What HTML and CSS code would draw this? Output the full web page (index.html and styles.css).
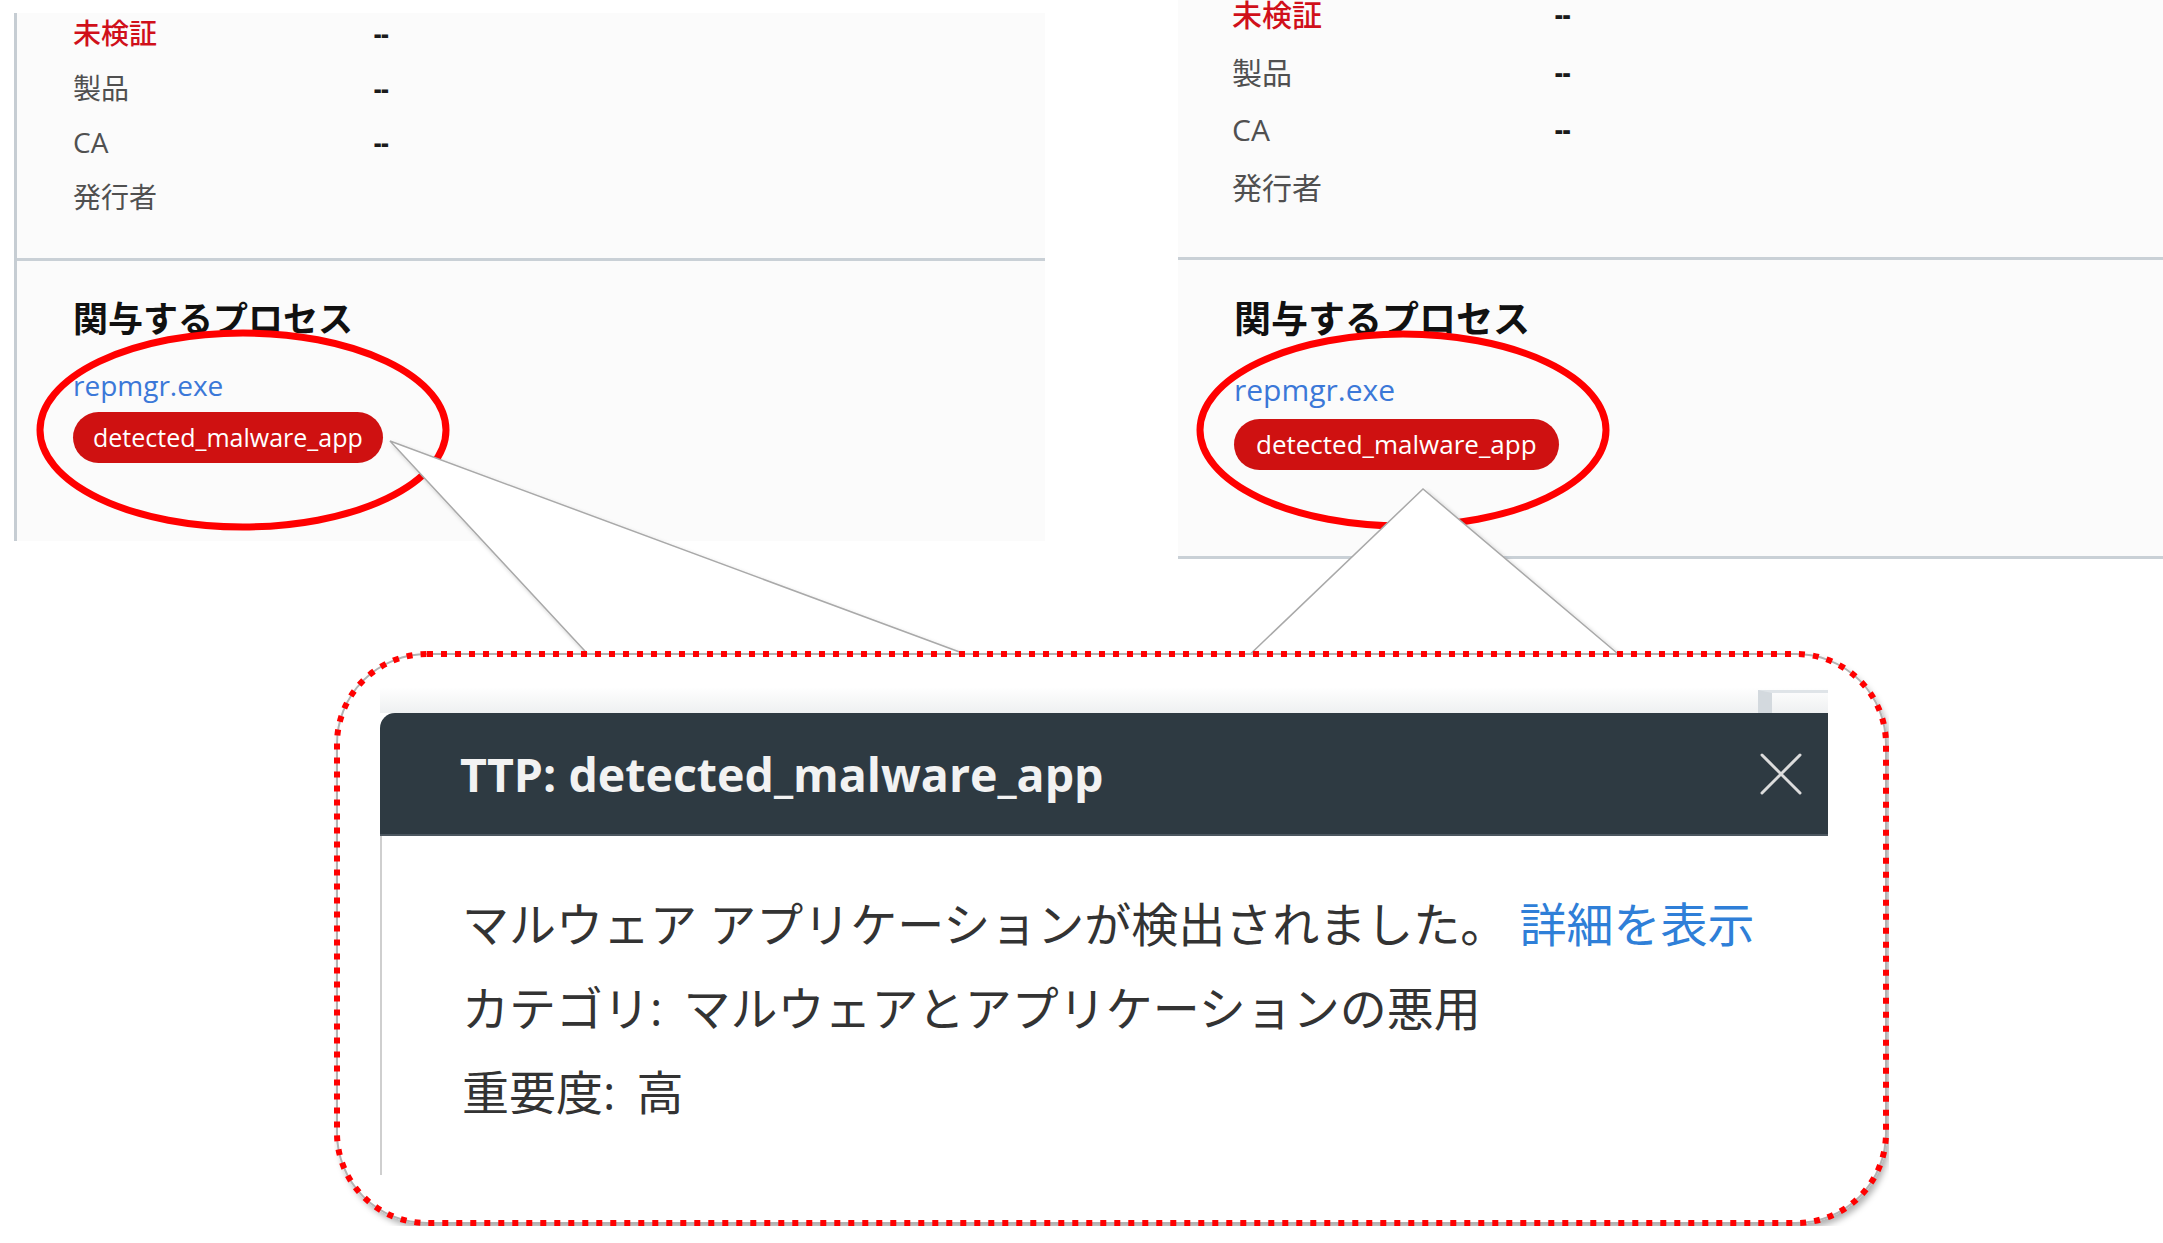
FILE: index.html
```html
<!DOCTYPE html>
<html lang="ja">
<head>
<meta charset="utf-8">
<title>TTP: detected_malware_app</title>
<link rel="stylesheet" href="styles.css">
</head>
<body>
<div class="page">
  <div class="panels">
    <section class="panel panel--left">
      <dl class="props">
        <dt class="warn">未検証</dt><dd>--</dd>
        <dt>製品</dt><dd>--</dd>
        <dt>CA</dt><dd>--</dd>
        <dt>発行者</dt><dd></dd>
      </dl>
      <div class="procs">
        <h3 class="procs-title">関与するプロセス</h3>
        <a class="proc">repmgr.exe</a>
        <span class="pill">detected_malware_app</span>
      </div>
    </section>
    <section class="panel panel--right">
      <dl class="props">
        <dt class="warn">未検証</dt><dd>--</dd>
        <dt>製品</dt><dd>--</dd>
        <dt>CA</dt><dd>--</dd>
        <dt>発行者</dt><dd></dd>
      </dl>
      <div class="procs">
        <h3 class="procs-title">関与するプロセス</h3>
        <a class="proc">repmgr.exe</a>
        <span class="pill">detected_malware_app</span>
      </div>
    </section>
  </div>

  <svg class="marks" width="2163" height="1243" viewBox="0 0 2163 1243">
    <defs>
      <filter id="lineShadow" x="-20%" y="-20%" width="140%" height="140%">
        <feDropShadow dx="3" dy="3" stdDeviation="2" flood-color="#000" flood-opacity="0.22"/>
      </filter>
    </defs>
    <ellipse cx="243" cy="430" rx="203" ry="97" fill="none" stroke="#ff0000" stroke-width="7"/>
    <ellipse cx="1403" cy="430" rx="203" ry="96" fill="none" stroke="#ff0000" stroke-width="7"/>
    <g filter="url(#lineShadow)">
      <polygon points="390,441 597,664 992,664" fill="#ffffff"/>
      <polyline points="597,664 390,441 992,664" fill="none" stroke="#a9a9a9" stroke-width="1.5"/>
      <polygon points="1423,489 1240,664 1630,664" fill="#ffffff"/>
      <polyline points="1240,664 1423,489 1630,664" fill="none" stroke="#a9a9a9" stroke-width="1.5"/>
    </g>
  </svg>

  <div class="callout">
    <svg class="callout-frame" width="1555" height="575" viewBox="0 0 1555 575">
      <defs>
        <filter id="boxShadow" x="-5%" y="-5%" width="110%" height="115%">
          <feDropShadow dx="3" dy="5" stdDeviation="3" flood-color="#000" flood-opacity="0.3"/>
        </filter>
      </defs>
      <rect x="3" y="3" width="1549" height="569" rx="90" ry="90" fill="#ffffff" stroke="#b3b3b3" stroke-width="2" filter="url(#boxShadow)"/>
      <rect x="3" y="3" width="1549" height="569" rx="90" ry="90" fill="none" stroke="#ff0000" stroke-width="6" stroke-dasharray="6 8"/>
    </svg>
    <div class="dialog">
      <div class="dialog-top"><span class="tab"></span></div>
      <div class="dialog-head">
        <h2 class="dialog-title">TTP: detected_malware_app</h2>
        <span class="close" aria-label="閉じる">
          <svg width="42" height="42" viewBox="0 0 42 42"><path d="M2 2 L40 40 M40 2 L2 40" stroke="#dcdcdc" stroke-width="3" fill="none" stroke-linecap="round"/></svg>
        </span>
      </div>
      <div class="dialog-body">
        <p>マルウェア アプリケーションが検出されました。 <a class="more">詳細を表示</a></p>
        <p>カテゴリ<span class="sep">:</span> マルウェアとアプリケーションの悪用</p>
        <p>重要度<span class="sep">:</span> 高</p>
      </div>
    </div>
  </div>
</div>
</body>
</html>
```

FILE: styles.css
```css
body {
  margin: 0;
  background: #ffffff;
  font-family: "Open Sans", "Noto Sans CJK JP", sans-serif;
  color: #333333;
}

.page {
  position: relative;
  width: 2163px;
  height: 1243px;
  overflow: hidden;
}

/* ---------- panels ---------- */
.panels {
  display: flex;
  align-items: flex-start;
}

.panel {
  background: #fbfbfb;
  box-sizing: border-box;
}

.panel--left {
  margin-left: 14px;
  margin-top: 13px;
  width: 1031px;
  border-left: 3px solid #c6cdd3;
}

.panel--right {
  margin-left: 133px;
  flex: 1;
  border-bottom: 3px solid #c9d0d6;
}

.props {
  display: grid;
  grid-template-columns: 301px 1fr;
  row-gap: 14.5px;
  margin: 0;
  padding: 0 0 41.5px 56px;
  border-bottom: 3px solid #c9d0d6;
  font-size: 28px;
  line-height: 40px;
}

.props dt {
  color: #505050;
}

.props dt.warn {
  color: #d0101a;
  font-weight: 500;
}

.props dd {
  margin: 0;
  font-size: 23px;
  font-weight: 800;
  color: #1a1a1a;
}

.procs {
  display: flex;
  flex-direction: column;
  align-items: flex-start;
  padding: 38px 0 78px 56px;
}

.procs-title {
  margin: 0;
  font-size: 35px;
  line-height: 40px;
  font-weight: 700;
  color: #111111;
}

.proc {
  margin-top: 29px;
  font-size: 28px;
  line-height: 34px;
  color: #3b78d8;
}

.pill {
  margin-top: 10px;
  padding: 0 20px;
  height: 51px;
  line-height: 51px;
  border-radius: 26px;
  background: #cf1111;
  color: #ffffff;
  font-size: 25px;
}

/* right panel is captured slightly larger */
.panel--right .props {
  grid-template-columns: 323px 1fr;
  row-gap: 27.7px;
  padding: 0 0 54px 54px;
  font-size: 30px;
  line-height: 30px;
}

.panel--right .props dd {
  font-size: 24px;
}

.panel--right .procs {
  padding: 38px 0 86px 56px;
}

.panel--right .procs-title {
  font-size: 37px;
  line-height: 42px;
}

.panel--right .proc {
  margin-top: 33px;
  font-size: 30px;
}

.panel--right .pill {
  margin-top: 12px;
  padding: 0 22px;
  font-size: 26px;
}

/* ---------- annotation layer ---------- */
.marks {
  position: absolute;
  left: 0;
  top: 0;
  pointer-events: none;
}

.callout {
  position: absolute;
  left: 334px;
  top: 651px;
  width: 1555px;
  height: 575px;
  box-sizing: border-box;
  padding: 36px 0 0 46px;
}

.callout-frame {
  position: absolute;
  left: 0;
  top: 0;
}

.dialog {
  position: relative;
  width: 1448px;
}

.dialog-top {
  display: flex;
  justify-content: flex-end;
  height: 26px;
  background: linear-gradient(#ffffff, #eef0f1);
}

.tab {
  width: 70px;
  height: 23px;
  margin-top: 3px;
  border-top: 3px solid #dfe4e8;
  border-left: 14px solid #d3d9de;
  box-sizing: border-box;
}

.dialog-head {
  display: flex;
  align-items: center;
  justify-content: space-between;
  height: 123px;
  padding: 0 26px 0 80px;
  box-sizing: border-box;
  background: #2e3a42;
  border-top-left-radius: 15px;
  border-bottom: 2px solid #4c5760;
}

.dialog-title {
  margin: 0;
  font-size: 46.5px;
  font-weight: 700;
  color: #f2f2f2;
}

.close {
  display: flex;
}

.dialog-body {
  padding: 46px 0 41px 80px;
  border-left: 2px solid #cfcfcf;
  font-size: 47px;
  line-height: 84px;
  color: #333333;
}

.dialog-body p {
  margin: 0;
}

.sep {
  padding-right: 9px;
}

.more {
  color: #2f7fd8;
}
```
